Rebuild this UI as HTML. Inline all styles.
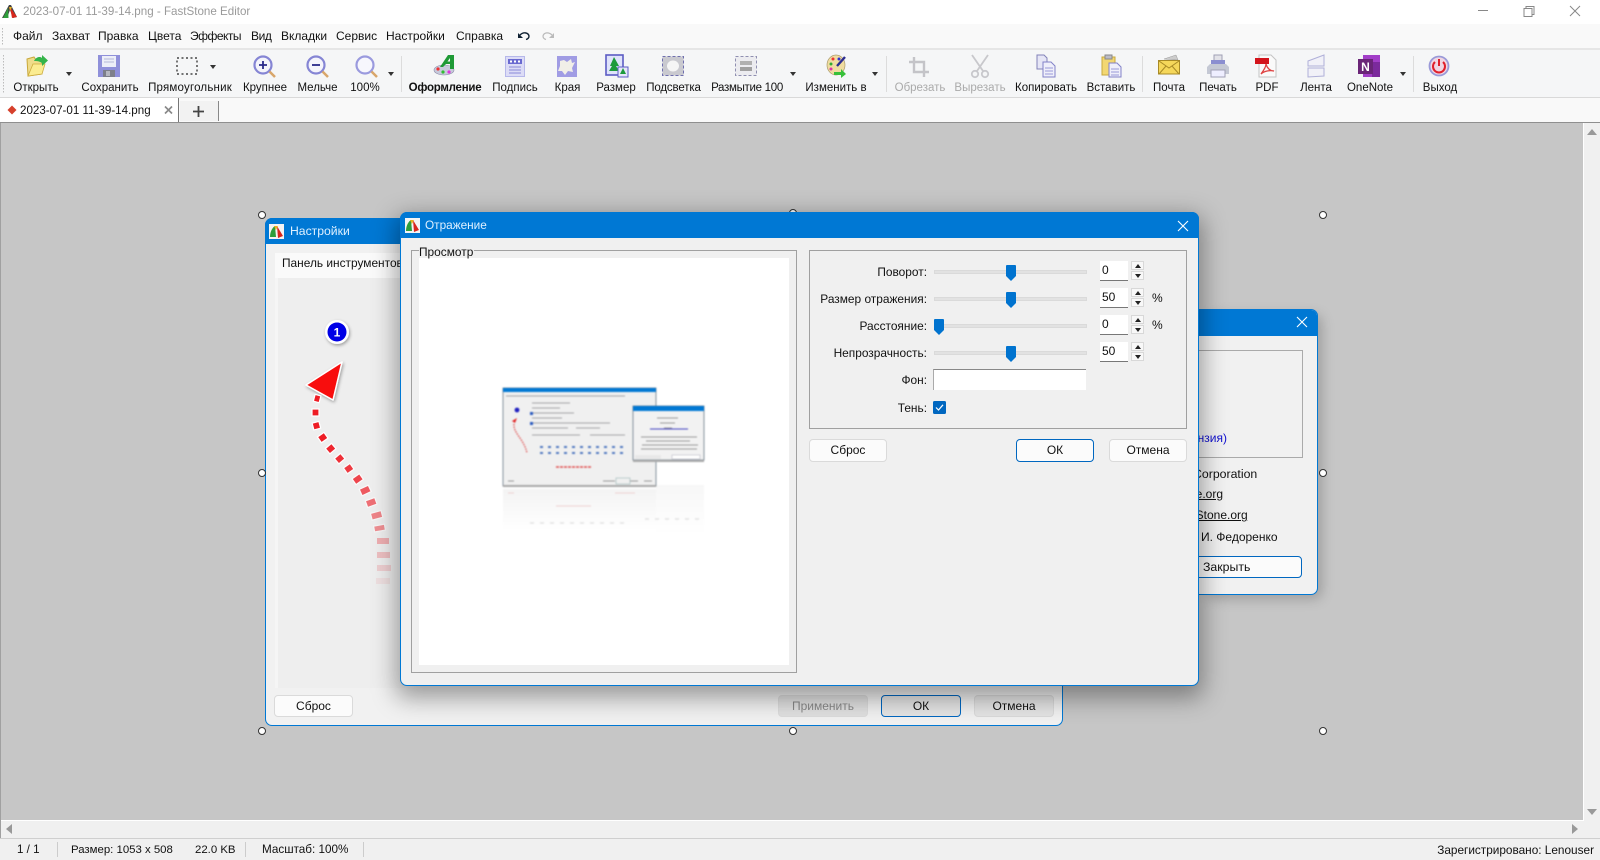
<!DOCTYPE html>
<html lang="ru"><head><meta charset="utf-8"><title>FastStone Editor</title>
<style>
html,body{margin:0;padding:0;width:1600px;height:860px;overflow:hidden;background:#fff;font-family:"Liberation Sans","Noto Sans CJK SC",sans-serif;font-size:12px;color:#111}
.a,.t,.c,.r{position:absolute;white-space:nowrap}
.t{line-height:16px;transform:translateY(-8px)}
.c{line-height:16px;transform:translate(-50%,-8px);font-size:11.5px}
.r{line-height:16px;transform:translateY(-8px);text-align:right}
.d{color:#aaa}
.btn{position:absolute;box-sizing:border-box;background:#fbfbfb;border:1px solid #dadada;border-radius:4px;text-align:center;font-size:12px;line-height:20px;color:#111}
.btn.p{border:1.5px solid #0067c0;border-radius:4px}
.h{position:absolute;width:6px;height:6px;border:1px solid #333;border-radius:50%;background:#fff;z-index:20}
.arr{position:absolute;width:0;height:0;border-left:3.5px solid transparent;border-right:3.5px solid transparent;border-top:4px solid #333}
.sep{position:absolute;width:1px;top:56px;height:36px;background:#dcdcdc}
svg.i{position:absolute;overflow:visible}
.track{position:absolute;left:934px;width:153px;height:4px;background:#e2e2e2;border:1px solid #dadada;box-sizing:border-box}
.ed{position:absolute;left:1100px;width:28px;height:20px;background:#fff;border-bottom:1px solid #777;box-sizing:border-box;padding-left:2px;font-size:12px;line-height:19px}
.sp{position:absolute;left:1131px;width:13px;height:9px;background:#f8f8f8;border:1px solid #d8d8d8;box-sizing:border-box}
.sp:after{content:"";position:absolute;left:2.5px;top:1.5px;border-left:3px solid transparent;border-right:3px solid transparent}
.sp.u:after{border-bottom:4px solid #222}
.sp.w:after{border-top:4px solid #222}
.thumb{position:absolute;left:1006px;width:10px;height:16px}
.lb{font-size:11.9px}
</style></head><body>

<!-- chrome backgrounds -->
<div class="a" style="left:0;top:24px;width:1600px;height:24px;background:#f9f9f9"></div>
<div class="a" style="left:0;top:48px;width:1600px;height:2px;background:#e6e6e6"></div>
<div class="a" style="left:0;top:50px;width:1600px;height:47px;background:#f5f6f7"></div>
<div class="a" style="left:0;top:97px;width:1600px;height:1px;background:#d9d9d9"></div>
<div class="a" style="left:0;top:98px;width:1600px;height:24px;background:#f9f9f9"></div>
<div class="a" style="left:0;top:122px;width:1600px;height:1px;background:#8f8f8f"></div>

<!-- title bar -->
<svg class="i" style="left:2px;top:4px" width="16" height="15" viewBox="0 0 16 15"><path d="M0 14 L7 1 L9 1 L15 13 L11 14 L8 6 L5 14Z" fill="#444"/><path d="M1 14 L6 4 L6.5 14Z" fill="#2e9d3a"/><path d="M8 3 L15 13 L10 14Z" fill="#d8261c"/><path d="M7 3 L10 3 L8 7Z" fill="#e8b020"/></svg>
<div class="t" style="left:23px;top:12px;color:#9a9a9a;font-size:11.6px">2023-07-01 11-39-14.png - FastStone Editor</div>
<svg class="i" style="left:1475px;top:5px" width="120" height="14" viewBox="0 0 120 14" fill="none" stroke="#888" stroke-width="1"><path d="M3 5.5H13"/><path d="M49 3.5h8v8h-8z M51 3.5V1.5h8v8h-2"/><path d="M95 1 L105 11 M105 1 L95 11"/></svg>

<!-- menu -->
<svg class="i" style="left:1px;top:28px" width="4" height="18"><path d="M1.5 0V18" stroke="#bbb" stroke-dasharray="1.5 1.5"/></svg>
<div class="t" style="left:13px;top:36px">Файл</div>
<div class="t" style="left:52px;top:36px">Захват</div>
<div class="t" style="left:98px;top:36px">Правка</div>
<div class="t" style="left:148px;top:36px">Цвета</div>
<div class="t" style="left:190px;top:36px;letter-spacing:-.5px">Эффекты</div>
<div class="t" style="left:251px;top:36px;letter-spacing:-.4px">Вид</div>
<div class="t" style="left:281px;top:36px">Вкладки</div>
<div class="t" style="left:336px;top:36px">Сервис</div>
<div class="t" style="left:386px;top:36px">Настройки</div>
<div class="t" style="left:456px;top:36px">Справка</div>
<svg class="i" style="left:517px;top:30px" width="38" height="12" viewBox="0 0 38 12" fill="none"><path d="M3 5 C6 2 11 2 12 6 C12 8 11 9 9 9.5" stroke="#123" stroke-width="1.4"/><path d="M1 3 L1 8 L6 8Z" fill="#123"/><path d="M35 5 C32 2 27 2 26 6 C26 8 27 9 29 9.5" stroke="#bbb" stroke-width="1.2"/><path d="M37 3 L37 8 L32 8Z" fill="#bbb"/></svg>

<!-- toolbar grip -->
<svg class="i" style="left:2px;top:55px" width="4" height="38"><path d="M1.5 0V38" stroke="#bbb" stroke-dasharray="1.5 1.5"/></svg>

<!-- toolbar icons -->
<!-- open -->
<svg class="i" style="left:25px;top:54px" width="24" height="24" viewBox="0 0 24 24"><path d="M2 5 L9 3 L11 6 L17 6 L17 20 L3 22Z" fill="#efdc8a" stroke="#c8a83c"/><path d="M3 22 L8 10 L20 10 L17 20Z" fill="#fbec91" stroke="#cdac3e" stroke-width=".8"/><path d="M9 7 C11 3 15 2 17 4 L17 1 L23 6.5 L17 12 L17 9 C14 7 12 7 9 7Z" fill="#34b44a"/></svg>
<!-- save -->
<svg class="i" style="left:98px;top:55px" width="22" height="22" viewBox="0 0 22 22"><rect width="22" height="22" fill="#8f90da"/><rect x="4" y="1" width="14" height="11" fill="#eceeF8"/><path d="M6 4H16M6 7H16" stroke="#b4b8d8"/><rect x="5" y="15" width="12" height="7" fill="#7d7f8a"/><rect x="8" y="16" width="4" height="5" fill="#b6b8c0"/></svg>
<!-- rect -->
<svg class="i" style="left:176px;top:57px" width="22" height="18"><rect x="1" y="1" width="20" height="16" fill="none" stroke="#222" stroke-width="1.2" stroke-dasharray="2 2.5"/></svg>
<!-- zoom in -->
<svg class="i" style="left:252px;top:54px" width="26" height="26" viewBox="0 0 26 26"><circle cx="11" cy="11" r="8.5" fill="#f4f4fb" stroke="#8585d4" stroke-width="2.2"/><path d="M17.5 17.5L23 23" stroke="#d8a66a" stroke-width="2.5"/><path d="M7 11H15M11 7V15" stroke="#2a2a8a" stroke-width="1.8"/></svg>
<!-- zoom out -->
<svg class="i" style="left:305px;top:54px" width="26" height="26" viewBox="0 0 26 26"><circle cx="11" cy="11" r="8.5" fill="#f4f4fb" stroke="#8585d4" stroke-width="2.2"/><path d="M17.5 17.5L23 23" stroke="#d8a66a" stroke-width="2.5"/><path d="M7 11H15" stroke="#2a2a8a" stroke-width="1.8"/></svg>
<!-- 100 -->
<svg class="i" style="left:354px;top:54px" width="26" height="26" viewBox="0 0 26 26"><circle cx="11" cy="11" r="8.5" fill="#f7f7fd" stroke="#9a9ade" stroke-width="2.2"/><path d="M17.5 17.5L23 23" stroke="#d8a66a" stroke-width="2.5"/></svg>
<!-- style -->
<svg class="i" style="left:433px;top:54px" width="24" height="23" viewBox="0 0 24 23"><ellipse cx="11" cy="16" rx="10" ry="5" fill="#c8cadc" stroke="#8a8ca8" stroke-width=".6"/><circle cx="5" cy="15" r="1.6" fill="#e33"/><circle cx="10" cy="18" r="1.6" fill="#3b3"/><circle cx="16" cy="18" r="1.6" fill="#d3d"/><path d="M7 13 L15 1 L21 1 L21 15 L17 15 L17 10 L13 10 L10 13Z" fill="#1f9a36"/><path d="M14.5 7.5 L17 4 L17 7.5Z" fill="#f5f6f7"/></svg>
<!-- sign -->
<svg class="i" style="left:505px;top:56px" width="20" height="21" viewBox="0 0 20 21"><rect width="20" height="21" fill="#b6b8ea"/><rect x="1" y="1" width="18" height="19" fill="#dcdcf6"/><rect x="3" y="3" width="14" height="5" fill="#6a6ad0"/><path d="M5 4.5h2v2h-2zM9 4.5h2v2h-2zM13 4.5h2v2h-2z" fill="#fff"/><path d="M4 11H16M4 14H16M4 17H16" stroke="#8a8ad8"/></svg>
<!-- edges -->
<svg class="i" style="left:557px;top:56px" width="20" height="21" viewBox="0 0 20 21"><rect width="20" height="21" fill="#a09ce4"/><path d="M3 5 L7 4 L10 6 L14 3 L15 7 L18 6 L15 12 L16 16 L11 15 L8 19 L5 15 L1 15 L3 10Z" fill="#f1efe8"/></svg>
<!-- resize -->
<svg class="i" style="left:605px;top:54px" width="24" height="24" viewBox="0 0 24 24"><rect x="1" y="1" width="17" height="20" fill="#dfe3fb" stroke="#5c5cc4" stroke-width="1.6"/><path d="M9 3 L14 12 L11 12 L14 17 L4 17 L7 12 L5 12Z" fill="#1d9a3c"/><rect x="13" y="13" width="10" height="10" fill="#e6e6fa" stroke="#5c5cc4"/><path d="M18 14 L21 20 L15 20Z" fill="#1d9a3c"/></svg>
<!-- highlight -->
<svg class="i" style="left:662px;top:56px" width="22" height="20"><rect x=".5" y=".5" width="21" height="19" fill="#c9c9cf" stroke="#6f6fae" stroke-dasharray="3 2"/><ellipse cx="11" cy="10" rx="6" ry="5.5" fill="#f5f5f5"/></svg>
<!-- blur -->
<svg class="i" style="left:735px;top:56px;" width="22" height="20"><rect x=".5" y=".5" width="21" height="19" fill="#ececf0" stroke="#8f8fb0" stroke-dasharray="3 2"/><rect x="5" y="5" width="12" height="4" fill="#b0b0b0"/><rect x="5" y="11" width="12" height="4" fill="#a0a0a0"/></svg>
<!-- palette -->
<svg class="i" style="left:826px;top:54px" width="22" height="24" viewBox="0 0 22 24"><ellipse cx="10" cy="11" rx="9" ry="10" fill="#f0dca0" stroke="#aa9a6a" stroke-width=".7"/><circle cx="7" cy="5" r="1.5" fill="#e33"/><circle cx="13" cy="5" r="1.5" fill="#33c"/><circle cx="5" cy="10" r="1.5" fill="#3a3"/><circle cx="5" cy="15" r="1.5" fill="#d3a"/><path d="M11 12 L19 3" stroke="#2c2c90" stroke-width="2.4"/><path d="M8 18 H15 V15 L20 20 L15 24 V21 H8Z" fill="#38c03a"/></svg>
<!-- crop -->
<svg class="i" style="left:908px;top:56px" width="22" height="22" fill="none" stroke="#c4c4c8" stroke-width="2.4"><path d="M6 1V16H21M1 6H16V21"/></svg>
<!-- scissors -->
<svg class="i" style="left:970px;top:54px" width="20" height="24" fill="none" stroke="#c8c8cc" stroke-width="1.8"><path d="M2 1L13 17M18 1L7 17"/><circle cx="5" cy="20" r="3.2"/><circle cx="15" cy="20" r="3.2"/></svg>
<!-- copy -->
<svg class="i" style="left:1036px;top:54px" width="20" height="24" viewBox="0 0 20 24"><path d="M1 1H8L11 4V15H1Z" fill="#e6e6f6" stroke="#8282b8"/><path d="M7 8H15L19 12V23H7Z" fill="#efeffa" stroke="#8282c8"/><path d="M9 14H17M9 17H17M9 20H17" stroke="#9a9ad8"/></svg>
<!-- paste -->
<svg class="i" style="left:1101px;top:54px" width="21" height="24" viewBox="0 0 21 24"><rect x="1" y="3" width="13" height="18" fill="#f2d772" stroke="#c8a83c"/><rect x="4" y="1" width="7" height="4" fill="#bcbcc8" stroke="#888"/><path d="M8 9H16L20 13V23H8Z" fill="#efeffa" stroke="#8282c8"/><path d="M10 15H18M10 18H18M10 21H18" stroke="#9a9ad8"/></svg>
<!-- mail -->
<svg class="i" style="left:1158px;top:55px" width="22" height="20" viewBox="0 0 22 20"><path d="M6 4 L18 0 L20 5Z" fill="#ccc" stroke="#999" stroke-width=".5"/><rect x=".5" y="5.5" width="21" height="13.5" fill="#f5d75a" stroke="#a88a26"/><path d="M1 6 L11 13 L21 6M1 19L8 11M21 19L14 11" fill="none" stroke="#a88a26"/></svg>
<!-- print -->
<svg class="i" style="left:1207px;top:54px" width="22" height="24" viewBox="0 0 22 24"><rect x="7" y="1" width="8" height="7" fill="#e2e2e8" stroke="#a0a0b4"/><rect x="4" y="6" width="14" height="6" fill="#8a8ed0"/><path d="M0 13 L3 10 H19 L22 13 V20 H0Z" fill="#c4c8d4"/><rect x="4" y="16" width="14" height="7" fill="#eef" stroke="#a0a0b4"/></svg>
<!-- pdf -->
<svg class="i" style="left:1255px;top:54px" width="22" height="24" viewBox="0 0 22 24"><path d="M4 1H16L21 6V23H4Z" fill="#fafafa" stroke="#c4c4c4"/><rect x="0" y="4" width="14" height="6" fill="#d3141c"/><path d="M6 20 C9 16 11 12 11 10 C12 14 15 17 19 17 C15 16 9 17 6 20Z" fill="none" stroke="#de4040" stroke-width="1.3"/></svg>
<!-- ribbon -->
<svg class="i" style="left:1307px;top:54px" width="20" height="24" fill="#f1f1f8" stroke="#b0b0d8"><path d="M1 7 L17 1 V12 H1Z"/><path d="M1 14 H17 V22 L1 23Z"/></svg>
<!-- onenote -->
<svg class="i" style="left:1358px;top:54px" width="22" height="24" viewBox="0 0 22 24"><rect x="5" y="1" width="17" height="22" fill="#a23ec8"/><rect x="14" y="8" width="8" height="15" fill="#7b2a9c"/><rect x="0" y="5" width="15" height="15" fill="#6a2578"/><text x="7.5" y="17" text-anchor="middle" fill="#fff" font-size="12" font-weight="bold" font-family="Liberation Sans">N</text></svg>
<!-- exit -->
<svg class="i" style="left:1428px;top:55px" width="22" height="22" viewBox="0 0 22 22" fill="none"><circle cx="11" cy="11" r="9.5" fill="#f0d6e2" stroke="#9a9ad8" stroke-width="1.8"/><path d="M7 7 A6 6 0 1 0 15 7" stroke="#e0202c" stroke-width="2"/><path d="M11 4V11" stroke="#e0202c" stroke-width="2"/></svg>

<div class="arr" style="left:66px;top:72px"></div>
<div class="arr" style="left:210px;top:65px"></div>
<div class="arr" style="left:388px;top:72px"></div>
<div class="arr" style="left:790px;top:72px"></div>
<div class="arr" style="left:872px;top:72px"></div>
<div class="arr" style="left:1400px;top:72px"></div>
<div class="sep" style="left:401px"></div><div class="sep" style="left:886px"></div><div class="sep" style="left:1142px"></div><div class="sep" style="left:1413px"></div>

<!-- toolbar labels -->
<div class="c" style="left:36px;top:88px">Открыть</div>
<div class="c" style="left:110px;top:88px">Сохранить</div>
<div class="c" style="left:190px;top:88px;letter-spacing:.2px">Прямоугольник</div>
<div class="c" style="left:265px;top:88px">Крупнее</div>
<div class="c" style="left:317.5px;top:88px">Мельче</div>
<div class="c" style="left:365px;top:88px">100%</div>
<div class="c" style="left:445px;top:88px;font-weight:bold;letter-spacing:-.25px">Оформление</div>
<div class="c" style="left:515px;top:88px">Подпись</div>
<div class="c" style="left:567.5px;top:88px">Края</div>
<div class="c" style="left:616px;top:88px">Размер</div>
<div class="c" style="left:673.5px;top:88px;letter-spacing:-.15px">Подсветка</div>
<div class="c" style="left:747px;top:88px;letter-spacing:-.3px">Размытие 100</div>
<div class="c" style="left:836px;top:88px">Изменить в</div>
<div class="c d" style="left:920px;top:88px">Обрезать</div>
<div class="c d" style="left:980px;top:88px">Вырезать</div>
<div class="c" style="left:1046px;top:88px">Копировать</div>
<div class="c" style="left:1111px;top:88px">Вставить</div>
<div class="c" style="left:1169px;top:88px">Почта</div>
<div class="c" style="left:1218px;top:88px">Печать</div>
<div class="c" style="left:1267px;top:88px">PDF</div>
<div class="c" style="left:1316px;top:88px">Лента</div>
<div class="c" style="left:1370px;top:88px">OneNote</div>
<div class="c" style="left:1440px;top:88px">Выход</div>

<!-- tabs -->
<div class="a" style="left:0;top:98px;width:178px;height:24px;background:#fff;border-right:1.5px solid #777;border-bottom:0"></div>
<div class="a" style="left:180px;top:101px;width:38px;height:20px;background:#f2f2f2;border-right:1.5px solid #888"></div>
<svg class="i" style="left:7px;top:105px" width="10" height="10"><path d="M5 0.5L9.5 5L5 9.5L0.5 5Z" fill="#d6402c"/></svg>
<div class="t" style="left:20px;top:111px;font-size:11.6px">2023-07-01 11-39-14.png</div>
<svg class="i" style="left:164px;top:106px" width="9" height="8"><path d="M1 0.5L8 7.5M8 0.5L1 7.5" stroke="#888" stroke-width="1.6"/></svg>
<svg class="i" style="left:193px;top:106px" width="11" height="11"><path d="M0 5.5H11M5.5 0V11" stroke="#444" stroke-width="1.8"/></svg>

<!-- canvas -->
<div class="a" style="left:0;top:123px;width:1600px;height:715px;background:#f0f0f0"></div>
<div class="a" style="left:0;top:123px;width:1px;height:715px;background:#a0a0a0"></div>
<div class="a" style="left:1px;top:123px;width:1582px;height:697px;background:#c6c6c6"></div>
<div class="a" style="left:1px;top:820px;width:1583px;height:1px;background:#fff"></div>
<div class="a" style="left:1583px;top:123px;width:1px;height:698px;background:#fff"></div>
<svg class="i" style="left:1586px;top:128px" width="12" height="8"><path d="M1 7L6 1L11 7Z" fill="#999"/></svg>
<svg class="i" style="left:1586px;top:808px" width="12" height="8"><path d="M1 1L6 7L11 1Z" fill="#999"/></svg>
<svg class="i" style="left:5px;top:823px" width="8" height="12"><path d="M7 1L1 6L7 11Z" fill="#999"/></svg>
<svg class="i" style="left:1571px;top:823px" width="8" height="12"><path d="M1 1L7 6L1 11Z" fill="#999"/></svg>

<!-- settings window -->
<div class="a" style="left:265px;top:218px;width:798px;height:508px;box-sizing:border-box;background:#f1f1f1;border:1px solid #0078d4;border-radius:7px"></div>
<div class="a" style="left:265px;top:218px;width:798px;height:26px;background:#0078d4;border-radius:7px 7px 0 0"></div>
<svg class="i" style="left:269px;top:224px" width="15" height="15" viewBox="0 0 15 15"><rect width="15" height="15" fill="#f4f4f4"/><path d="M1 13 C1 7 4 3 6 2 L7 13Z" fill="#2e9d3a"/><path d="M8 2 L14 12 L9 14Z" fill="#d8261c"/><path d="M5 2H9L7 6Z" fill="#e8b020"/></svg>
<div class="t" style="left:290px;top:231px;color:#dff0ff;font-size:12.2px">Настройки</div>
<div class="a" style="left:275px;top:253px;width:125px;height:25px;background:#fafafa"></div>
<div class="t lb" style="left:282px;top:263px">Панель инструментов</div>
<div class="a" style="left:275px;top:278px;width:130px;height:410px;background:#eeeeee;border-left:3px solid #f5f5f5;box-sizing:border-box"></div>
<!-- number + arrow -->
<svg class="i" style="left:260px;top:300px;z-index:2" width="140" height="300" viewBox="0 0 140 300">
<defs><filter id="ds" x="-30%" y="-30%" width="160%" height="160%"><feDropShadow dx="1" dy="1.5" stdDeviation="1.5" flood-color="#000" flood-opacity=".35"/></filter></defs>
<circle cx="77" cy="32" r="12" fill="#fff" filter="url(#ds)"/><circle cx="77" cy="32" r="9.5" fill="#0000e6"/>
<text x="77" y="36.5" text-anchor="middle" fill="#fff" font-size="12" font-weight="bold" font-family="Liberation Sans">1</text>
<path d="M82 62 L46 85 L73 100 Z" fill="#f80a0a" stroke="#fff" stroke-width="1.5" stroke-linejoin="round" filter="url(#ds)"/>
<g fill="#ee1c25" stroke="#fff" stroke-width="1.2">
<rect x="54" y="95" width="6" height="7" transform="rotate(15 57 99)"/>
<rect x="52" y="109" width="7" height="7"/>
<rect x="53" y="122" width="7" height="7" transform="rotate(-15 57 126)"/>
<rect x="59" y="134" width="8" height="7" transform="rotate(-35 63 138)"/>
<rect x="67" y="145" width="8" height="7" transform="rotate(-40 71 149)" opacity=".95"/>
<rect x="76" y="155" width="8" height="7" transform="rotate(-40 80 159)" opacity=".9"/>
<rect x="85" y="165" width="8" height="7" transform="rotate(-35 89 169)" opacity=".85"/>
<rect x="93" y="176" width="9" height="7" transform="rotate(-35 97 179)" opacity=".8"/>
<rect x="100" y="187" width="10" height="7" transform="rotate(-25 105 190)" opacity=".7"/>
<rect x="106" y="199" width="10" height="7" transform="rotate(-20 111 202)" opacity=".6"/>
<rect x="111" y="212" width="11" height="7" transform="rotate(-15 116 215)" opacity=".5"/>
<rect x="114" y="225" width="11" height="6" transform="rotate(-10 120 228)" opacity=".45"/>
<rect x="117" y="238" width="12" height="6" opacity=".3" stroke="none"/>
<rect x="117" y="252" width="13" height="6" opacity=".22" stroke="none"/>
<rect x="117" y="265" width="14" height="6" opacity=".15" stroke="none"/>
<rect x="116" y="278" width="14" height="6" opacity=".07" stroke="none"/>
</g></svg>
<div class="btn" style="left:274px;top:695px;width:79px;height:22px">Сброс</div>
<div class="btn d" style="left:778px;top:695px;width:90px;height:22px;background:#e0e0e0;border-color:#dcdcdc;color:#888">Применить</div>
<div class="btn p" style="left:881px;top:695px;width:80px;height:22px;background:#e4e4e4">ОК</div>
<div class="btn" style="left:974px;top:695px;width:80px;height:22px;background:#e4e4e4">Отмена</div>

<!-- about window -->
<div class="a" style="left:1206px;top:315px;width:116px;height:284px;background:rgba(0,0,0,.2);filter:blur(6px);border-radius:8px"></div>
<div class="a" style="left:1100px;top:309px;width:218px;height:286px;box-sizing:border-box;background:#f1f1f1;border:1px solid #0078d4;border-radius:7px;overflow:hidden">
  <div class="a" style="left:0;top:0;width:100%;height:26px;background:#0078d4"></div>
  <div class="a" style="left:60px;top:40px;width:142px;height:108px;box-sizing:border-box;border:1px solid #aaa"></div>
</div>
<svg class="i" style="left:1296px;top:316px" width="12" height="12"><path d="M1 1L11 11M11 1L1 11" stroke="#fff" stroke-width="1.1"/></svg>
<div class="r" style="right:373px;top:438px;color:#1010d0">нзия)</div>
<div class="t" style="left:1193px;top:474px;font-size:12.3px">Corporation</div>
<div class="t" style="left:1189px;top:494px;font-size:12px;text-decoration:underline">ne.org</div>
<div class="t" style="left:1189px;top:515px;font-size:12px;text-decoration:underline">aStone.org</div>
<div class="t" style="left:1201px;top:537px;font-size:12px">И. Федоренко</div>
<div class="btn p" style="left:1150px;top:556px;width:152px;height:22px;background:#fbfbfb;text-align:left;padding-left:52px;font-size:12.3px">Закрыть</div>

<!-- dialog shadow (soft blur) -->
<div class="a" style="left:396px;top:216px;width:807px;height:482px;z-index:5;background:rgba(0,0,0,.36);filter:blur(12px);border-radius:10px"></div>

<!-- reflection dialog -->
<div class="a" style="left:400px;top:212px;width:799px;height:474px;box-sizing:border-box;background:#f0f0f0;border:1px solid #0078d4;border-radius:7px;z-index:5"></div>
<div class="a" style="left:400px;top:212px;width:799px;height:26px;background:#0078d4;border-radius:7px 7px 0 0;z-index:5"></div>
<div id="dlg" class="a" style="left:0;top:0;width:1600px;height:860px;z-index:6">
<svg class="i" style="left:405px;top:218px" width="15" height="15" viewBox="0 0 15 15"><rect width="15" height="15" fill="#f4f4f4"/><path d="M1 13 C1 7 4 3 6 2 L7 13Z" fill="#2e9d3a"/><path d="M8 2 L14 12 L9 14Z" fill="#d8261c"/><path d="M5 2H9L7 6Z" fill="#e8b020"/></svg>
<div class="t" style="left:425px;top:225px;color:#dff0ff;font-size:11.8px">Отражение</div>
<svg class="i" style="left:1177px;top:220px" width="12" height="12"><path d="M1 1L11 11M11 1L1 11" stroke="#fff" stroke-width="1.1"/></svg>

<div class="a" style="left:411px;top:250px;width:386px;height:423px;box-sizing:border-box;border:1px solid #a0a0a0"></div>
<div class="a" style="left:419px;top:258px;width:370px;height:407px;background:#fff"></div>
<div class="t lb" style="left:419px;top:252px;background:#f0f0f0;line-height:12px;transform:translateY(-6px);padding-right:1px">Просмотр</div>

<!-- thumbnail -->
<svg class="i" style="left:500px;top:385px;filter:blur(.7px)" width="208" height="155" viewBox="0 0 208 155">
<defs><linearGradient id="fd" x1="0" y1="0" x2="0" y2="1"><stop offset="0" stop-color="#000" stop-opacity=".14"/><stop offset="1" stop-color="#000" stop-opacity="0"/></linearGradient></defs>
<rect x="3" y="3" width="153" height="98" fill="#f0f0f0" stroke="#6a7a88" stroke-width=".8"/>
<rect x="3" y="3" width="153" height="4" fill="#0078d4"/>
<path d="M6 11H125M32 18H70M32 23H60M32 28H74M32 33H62M32 38H110M32 43H68M76 43H100M32 50H80M90 50H125" stroke="#a4a4a8" stroke-width="1"/>
<rect x="30" y="27" width="3" height="3" fill="#2a5ac0"/><rect x="30" y="37" width="3" height="3" fill="#2a5ac0"/>
<path d="M40 62H123M40 68H123" stroke="#5078c0" stroke-width="2" stroke-dasharray="3 5"/>
<circle cx="17" cy="25" r="2.4" fill="#2020c0"/>
<path d="M17 33 L12 36 L15 38Z" fill="#e02020"/><path d="M14 39 C13 48 24 54 27 68" fill="none" stroke="#e06060" stroke-dasharray="1.5 1" stroke-width="1.4"/>
<path d="M56 82H91" stroke="#e05050" stroke-width="1.6" stroke-dasharray="3 1"/>
<path d="M8 96H14M103 96H115M130 96H138M144 96H152" stroke="#999"/>
<rect x="116" y="93" width="14" height="6" fill="none" stroke="#8aa" stroke-width=".5"/>
<rect x="3" y="100" width="153" height="2" fill="#a8a8a8"/>
<rect x="133" y="21" width="71" height="54" fill="#f2f2f2" stroke="#6a7a88" stroke-width=".8"/>
<rect x="133" y="21" width="71" height="5" fill="#0078d4"/>
<path d="M157 33H178M160 38H175M164 43H172M141 52H197M146 56H190M142 60H198M141 64H197" stroke="#999" stroke-width="1"/>
<path d="M150 44H188" stroke="#4040c0"/>
<rect x="135" y="70" width="26" height="4" fill="#e8e8e8"/><rect x="172" y="70" width="28" height="4" fill="#fff" stroke="#99a" stroke-width=".4"/>
<rect x="133" y="75" width="71" height="2" fill="#aaa"/>
<rect x="3" y="104" width="153" height="42" fill="url(#fd)" opacity=".32"/>
<rect x="156" y="100" width="48" height="50" fill="url(#fd)" opacity=".22"/>
<path d="M8 108H14M115 108H135M56 121H91" stroke="#e8c0c0" stroke-width="1" opacity=".7"/>
<path d="M30 138H130M145 134H200" stroke="#e2e2e2" stroke-width="1.4" stroke-dasharray="4 6"/>
</svg>

<div class="a" style="left:809px;top:250px;width:378px;height:179px;box-sizing:border-box;border:1px solid #a0a0a0"></div>
<div class="r lb" style="right:673px;top:272px">Поворот:</div>
<div class="r lb" style="right:673px;top:299px">Размер отражения:</div>
<div class="r lb" style="right:673px;top:326px">Расстояние:</div>
<div class="r lb" style="right:673px;top:353px">Непрозрачность:</div>
<div class="r lb" style="right:673px;top:380px">Фон:</div>
<div class="r lb" style="right:673px;top:407.5px">Тень:</div>

<div class="track" style="top:270px"></div><div class="track" style="top:297px"></div><div class="track" style="top:324px"></div><div class="track" style="top:351px"></div>
<svg class="thumb" style="top:265px" viewBox="0 0 10 16"><path d="M0 1Q0 0 1 0H9Q10 0 10 1V11L5 16L0 11Z" fill="#0073cf"/></svg>
<svg class="thumb" style="top:292px" viewBox="0 0 10 16"><path d="M0 1Q0 0 1 0H9Q10 0 10 1V11L5 16L0 11Z" fill="#0073cf"/></svg>
<svg class="thumb" style="top:319px;left:934px" viewBox="0 0 10 16"><path d="M0 1Q0 0 1 0H9Q10 0 10 1V11L5 16L0 11Z" fill="#0073cf"/></svg>
<svg class="thumb" style="top:346px" viewBox="0 0 10 16"><path d="M0 1Q0 0 1 0H9Q10 0 10 1V11L5 16L0 11Z" fill="#0073cf"/></svg>

<div class="ed" style="top:261px">0</div><div class="ed" style="top:288px">50</div><div class="ed" style="top:315px">0</div><div class="ed" style="top:342px">50</div>
<div class="sp u" style="top:261px"></div><div class="sp w" style="top:271px"></div>
<div class="sp u" style="top:288px"></div><div class="sp w" style="top:298px"></div>
<div class="sp u" style="top:315px"></div><div class="sp w" style="top:325px"></div>
<div class="sp u" style="top:342px"></div><div class="sp w" style="top:352px"></div>
<div class="t" style="left:1152px;top:298px">%</div><div class="t" style="left:1152px;top:325px">%</div>

<div class="a" style="left:933px;top:369px;width:153px;height:21px;box-sizing:border-box;background:#fff;border-top:1px solid #888;border-left:1px solid #aaa"></div>
<svg class="i" style="left:933px;top:401px" width="13" height="13"><rect width="13" height="13" rx="1.5" fill="#0067c0"/><path d="M3 6.5L5.5 9L10 3.8" fill="none" stroke="#fff" stroke-width="1.2"/></svg>

<div class="btn" style="left:809px;top:439px;width:78px;height:23px;line-height:21px">Сброс</div>
<div class="btn p" style="left:1016px;top:439px;width:78px;height:23px;line-height:20px">ОК</div>
<div class="btn" style="left:1109px;top:439px;width:78px;height:23px;line-height:21px">Отмена</div>
</div>

<!-- handles -->
<div class="h" style="left:258px;top:211px"></div>
<div class="h" style="left:789px;top:209px;z-index:4"></div>
<div class="h" style="left:1319px;top:211px"></div>
<div class="h" style="left:258px;top:469px"></div>
<div class="h" style="left:1319px;top:469px"></div>
<div class="h" style="left:258px;top:727px"></div>
<div class="h" style="left:789px;top:727px"></div>
<div class="h" style="left:1319px;top:727px"></div>

<!-- status -->
<div class="a" style="left:0;top:838px;width:1600px;height:22px;background:#f0f0f0;border-top:1px solid #cfcfcf;box-sizing:border-box"></div>
<div class="t" style="left:17px;top:850px;font-size:11.6px">1 / 1</div>
<div class="a" style="left:57px;top:842px;width:1px;height:15px;background:#ccc"></div>
<div class="t" style="left:71px;top:850px;font-size:11.4px">Размер: 1053 x 508</div>
<div class="t" style="left:195px;top:850px;font-size:11.4px">22.0 KB</div>
<div class="a" style="left:245px;top:842px;width:1px;height:15px;background:#ccc"></div>
<div class="t" style="left:262px;top:850px;font-size:11.7px">Масштаб: 100%</div>
<div class="a" style="left:363px;top:842px;width:1px;height:15px;background:#ccc"></div>
<div class="r" style="right:6px;top:850px;font-size:11.8px">Зарегистрировано: Lenouser</div>
</body></html>
